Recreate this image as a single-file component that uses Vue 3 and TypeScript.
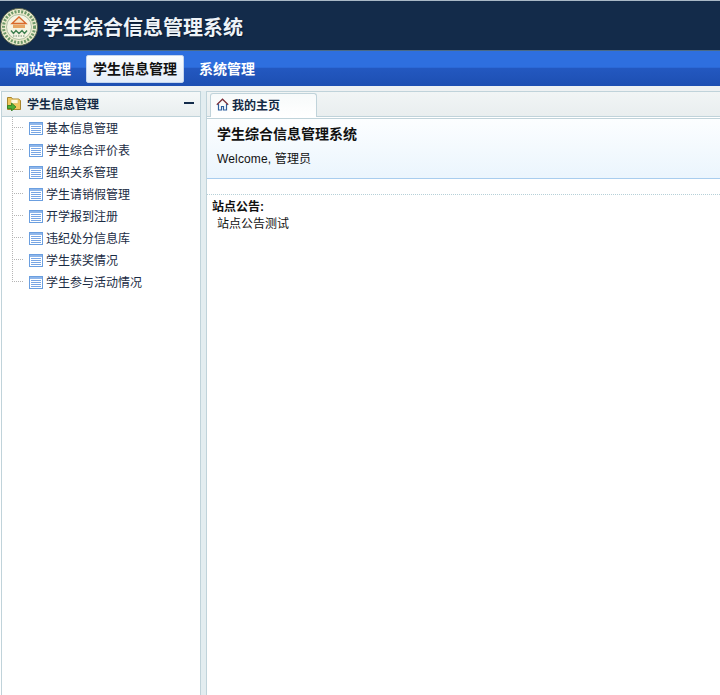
<template>
  <div class="page">
    <header class="top">
      <svg class="logo" width="38" height="38" viewBox="0 0 38 38">
        <circle cx="19" cy="19" r="18.500" fill="#eeeccf" stroke="#59664f" />
        <circle cx="19" cy="19" r="15.500" fill="none" stroke="#6f9a6a" stroke-width="3" stroke-dasharray="2 1.400" />
        <circle cx="19" cy="19" r="12.500" fill="#f5f3e2" stroke="#7fa07c" stroke-width=".6" />
        <path d="M19 9 26 15.500H12Z" fill="#f6e6c8" stroke="#d9692c" stroke-width="1.400" />
        <path d="M13 16.500h12v3.500H13Z" fill="#e7a562" />
        <path d="M11 22.500l2.500 3 2.500-3 3 3 3-3 2.500 3 2.500-3" fill="none" stroke="#3f7f4f" stroke-width="1.400" />
        <path d="M13 28h12" stroke="#6f8f70" stroke-width="1" stroke-dasharray="1.500 1" />
      </svg>
      <div class="sys-name">学生综合信息管理系统</div>
    </header>

    <nav class="nav">
      <a v-for="item in navItems" :key="item" class="nav-item" :class="{ active: item === activeNav }">{{ item }}</a>
    </nav>

    <div class="body">
      <aside class="side">
        <div class="side-head">
          <svg width="15" height="15" viewBox="0 0 15 15">
            <path d="M.5 1.500h4l1 1.500h6l2 1.500v9h-13Z" fill="#efc65e" stroke="#a9852c" />
            <path d="M4 3.500h7v4H4Z" fill="#fff8dc" stroke="#d9b75a" stroke-width=".6" />
            <path d="M.5 9.500h4V7L9 11 4.500 15v-2.500h-4Z" fill="#4fae35" stroke="#2c7a1e" stroke-width=".8" />
          </svg>
          <span class="side-title">学生信息管理</span>
          <i class="collapse"></i>
        </div>
        <ul class="tree">
          <li v-for="item in menu" :key="item" class="tree-row">
            <span class="tree-line"></span>
            <svg class="doc" width="14" height="13" viewBox="0 0 14 13">
              <rect x=".5" y=".5" width="13" height="12" fill="#fff" stroke="#6b9fe0" />
              <rect x="1" y="1" width="12" height="2" fill="#8fb6ea" />
              <path d="M2 4.500h10M2 6.500h10M2 8.500h10M2 10.500h10" stroke="#79a6e4" />
            </svg>
            <span>{{ item }}</span>
          </li>
        </ul>
      </aside>

      <div class="splitter"></div>

      <main class="main">
        <div class="tabs">
          <div class="tab">
            <svg width="13" height="13" viewBox="0 0 13 13">
              <path d="M.8 6.800 6.500 1.200l5.700 5.600" fill="none" stroke="#7a2f3a" stroke-width="1.200" />
              <path d="M2.500 6v6h3V8.500h2V12h3V6" fill="none" stroke="#2f5f9e" stroke-width="1.200" />
            </svg>
            <span>我的主页</span>
          </div>
        </div>
        <section class="welcome">
          <h1>学生综合信息管理系统</h1>
          <p>Welcome, 管理员</p>
        </section>
        <section class="notice">
          <h2>站点公告:</h2>
          <p>站点公告测试</p>
        </section>
      </main>
    </div>
  </div>
</template>

<script setup lang="ts">
const navItems = ['网站管理', '学生信息管理', '系统管理']
const activeNav = '学生信息管理'

const menu = [
  '基本信息管理',
  '学生综合评价表',
  '组织关系管理',
  '学生请销假管理',
  '开学报到注册',
  '违纪处分信息库',
  '学生获奖情况',
  '学生参与活动情况',
]
</script>

<style>
html,
body {
  margin: 0;
  overflow: hidden;
}
</style>

<style scoped>
.page {
  width: 720px;
  height: 695px;
  display: flex;
  flex-direction: column;
  overflow: hidden;
  background: #fff;
  font-family: Arial, 'Liberation Sans', 'Noto Sans CJK SC', sans-serif;
  font-size: 12px;
  color: #111;
}

.top {
  height: 50px;
  flex: none;
  box-sizing: border-box;
  display: flex;
  align-items: center;
  gap: 5px;
  background: #132b4a;
  border-top: 1px solid #a9b8c6;
}

.logo {
  margin-top: 3px;
  flex: none;
}

.sys-name {
  font-size: 20px;
  font-weight: 700;
  color: #eef3f8;
  margin-top: 1px;
  text-shadow: 1px 1px 1px #0a1a30;
}

.nav {
  height: 36px;
  flex: none;
  box-sizing: border-box;
  display: flex;
  align-items: center;
  padding-left: 8px;
  gap: 8px;
  border-top: 1px solid #4a6a86;
  background: linear-gradient(#2e6fdf 0%, #2e6fdf 46%, #2358c0 50%, #1d4fb2 100%);
}

.nav-item {
  height: 28px;
  box-sizing: border-box;
  line-height: 26px;
  padding: 0 6px;
  font-size: 14px;
  font-weight: 700;
  color: #fff;
  border: 1px solid transparent;
  border-radius: 2px;
}

.nav-item.active {
  color: #111;
  background: linear-gradient(#fbfdff, #e4edf9);
  border-color: #c3d4ee;
}

.body {
  flex: 1;
  min-height: 0;
  display: flex;
  padding-top: 5px;
  background: #fff linear-gradient(#eef1f2, #eef1f2) no-repeat 0 0 / 100% 5px;
}

.side {
  width: 200px;
  margin-left: 1px;
  flex: none;
  box-sizing: border-box;
  border: 1px solid #c0d3da;
  border-bottom: 0;
  background: #fff;
}

.side-head {
  height: 25px;
  box-sizing: border-box;
  display: flex;
  align-items: center;
  padding: 0 6px 2px 5px;
  background: linear-gradient(#f5f8f8, #e9eeef);
  border-bottom: 1px solid #c0d3da;
}

.side-title {
  margin-left: 5px;
  font-weight: 700;
  color: #142a44;
  flex: 1;
}

.collapse {
  width: 10px;
  height: 2px;
  background: #132b4a;
}

.tree {
  list-style: none;
  margin: 0;
  padding: 0;
}

.tree-row {
  position: relative;
  height: 22px;
  box-sizing: border-box;
  display: flex;
  align-items: center;
  padding: 0 0 2px 27px;
  gap: 3px;
  color: #1a2c44;
}

.doc {
  display: block;
  flex: none;
  margin-top: 3px;
}

.tree-line {
  position: absolute;
  left: 10px;
  top: 0;
  bottom: 0;
  width: 12px;
  background:
    linear-gradient(to right, #b5b5b5 50%, transparent 50%) repeat-x 0 10px / 2px 1px,
    linear-gradient(to bottom, #b5b5b5 50%, transparent 50%) repeat-y 0 0 / 1px 2px;
}

.tree-row:last-child .tree-line {
  bottom: 11px;
}

.splitter {
  width: 5px;
  flex: none;
  background: #e3edf0;
}

.main {
  flex: 1;
  min-width: 0;
  box-sizing: border-box;
  border-left: 1px solid #c0d3da;
  border-top: 1px solid #c0d3da;
}

.tabs {
  height: 25px;
  box-sizing: border-box;
  display: flex;
  align-items: flex-end;
  padding-left: 3px;
  background: linear-gradient(#f1f5f5, #e9eeef);
  border-bottom: 1px solid #c0d3da;
}

.tab {
  width: 107px;
  height: 24px;
  box-sizing: border-box;
  display: flex;
  align-items: center;
  gap: 3px;
  padding: 0 0 2px 5px;
  margin-bottom: -1px;
  font-weight: 700;
  color: #142a44;
  background: linear-gradient(#f7fafa, #fff);
  border: 1px solid #c0d3da;
  border-bottom: 0;
  border-radius: 3px 3px 0 0;
}

.welcome {
  height: 61px;
  box-sizing: border-box;
  padding: 7px 10px 0;
  background: linear-gradient(#fcfeff, #ebf5fd);
  border-bottom: 1px solid #a9cdee;
  border-top: 1px solid #c0d3da;
  margin-top: 1px;
}

.welcome h1 {
  margin: 0;
  font-size: 14px;
  line-height: 16px;
  font-weight: 700;
}

.welcome p {
  margin: 9px 0 0;
  line-height: 16px;
  letter-spacing: 0.15px;
}

.notice {
  margin-top: 15px;
  padding: 5px 5px 0;
  border-top: 1px dotted #b6d0d8;
}

.notice h2 {
  margin: 0;
  font-size: 12px;
  line-height: 14px;
  font-weight: 700;
}

.notice p {
  margin: 2px 0 0 5px;
  line-height: 16px;
}
</style>
